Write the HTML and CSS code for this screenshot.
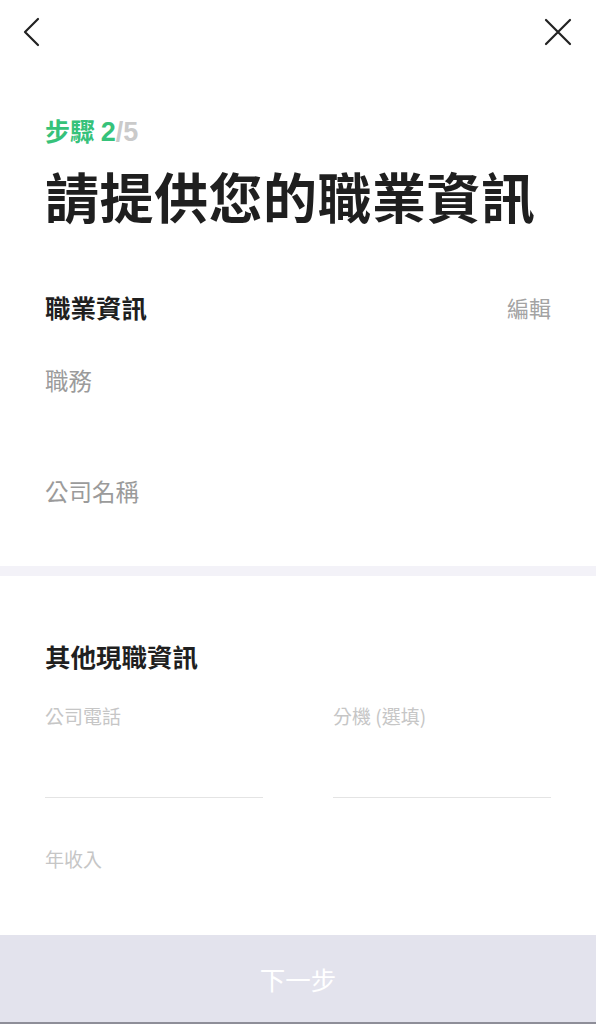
FILE: index.html
```html
<!DOCTYPE html>
<html lang="zh-Hant">
<head>
<meta charset="utf-8">
<title>請提供您的職業資訊</title>
<link rel="stylesheet" href="styles.css">
</head>
<body>
<div class="topbar">
  <svg class="icon" width="24" height="32" viewBox="0 0 24 32"><path d="M17 3 L4 16 L17 29" fill="none" stroke="#222" stroke-width="2.2" stroke-linecap="round" stroke-linejoin="round"/></svg>
  <svg class="icon" width="28" height="28" viewBox="0 0 28 28"><path d="M2 2 L26 26 M26 2 L2 26" fill="none" stroke="#222" stroke-width="2.2" stroke-linecap="round"/></svg>
</div>
<main class="content">
  <div class="step">步驟 <span class="num">2</span><span class="num step-total">/5</span></div>
  <h1 class="title">請提供您的職業資訊</h1>
  <div class="section-head">
    <span class="section-title">職業資訊</span>
    <span class="edit">編輯</span>
  </div>
  <div class="info-field">職務</div>
  <div class="info-field second">公司名稱</div>
</main>
<div class="divider"></div>
<section class="content">
  <div class="section-title other">其他現職資訊</div>
  <div class="field-row">
    <div class="field">
      <div class="field-label">公司電話</div>
      <div class="field-input"></div>
    </div>
    <div class="field">
      <div class="field-label">分機 (選填)</div>
      <div class="field-input"></div>
    </div>
  </div>
  <div class="field-label income">年收入</div>
</section>
<div class="bottom-bar">下一步</div>
</body>
</html>
```

FILE: styles.css
```css
html, body {
  margin: 0;
  padding: 0;
  background: #ffffff;
  font-family: "Noto Sans CJK TC", "Noto Sans", sans-serif;
  color: #222222;
}

.topbar {
  height: 64px;
  padding: 0 24px 0 21px;
  display: flex;
  justify-content: space-between;
  align-items: center;
}

.icon {
  display: block;
}

.content {
  padding: 0 45px;
}

.step {
  margin-top: 54px;
  font-size: 25px;
  line-height: 24px;
  font-weight: 700;
  color: #36c27a;
}

.num {
  font-family: "Liberation Sans", "Noto Sans", sans-serif;
  font-size: 27px;
}

.step-total {
  color: #cacaca;
}

.title {
  margin: 22px 0 0;
  font-size: 54px;
  line-height: 60px;
  font-weight: 700;
  color: #1f1f1f;
  letter-spacing: 0.5px;
}

.section-head {
  margin-top: 66px;
  display: flex;
  justify-content: space-between;
  align-items: center;
  height: 30px;
}

.section-title {
  font-size: 25.5px;
  line-height: 30px;
  font-weight: 700;
  color: #1f1f1f;
}

.edit {
  font-size: 22px;
  line-height: 30px;
  color: #a3a3a3;
}

.info-field {
  margin-top: 43px;
  font-size: 23.5px;
  line-height: 30px;
  color: #9b9b9b;
}

.info-field.second {
  margin-top: 81px;
}

.divider {
  margin-top: 60px;
  height: 10px;
  background: #f3f2f8;
}

.other {
  margin-top: 65px;
  font-size: 25.5px;
}

.field-row {
  margin-top: 33px;
  display: grid;
  grid-template-columns: 218px 218px;
  column-gap: 70px;
}

.field-label {
  font-size: 19px;
  line-height: 24px;
  color: #c6c6c6;
}

.field-input {
  height: 69px;
  border-bottom: 1px solid #e4e4e4;
}

.income {
  margin-top: 49px;
}

.bottom-bar {
  position: fixed;
  left: 0;
  right: 0;
  bottom: 0;
  height: 87px;
  background: #e3e3ed;
  border-bottom: 2px solid #8e8e98;
  display: flex;
  align-items: center;
  justify-content: center;
  font-size: 25.5px;
  color: #ffffff;
}
```
